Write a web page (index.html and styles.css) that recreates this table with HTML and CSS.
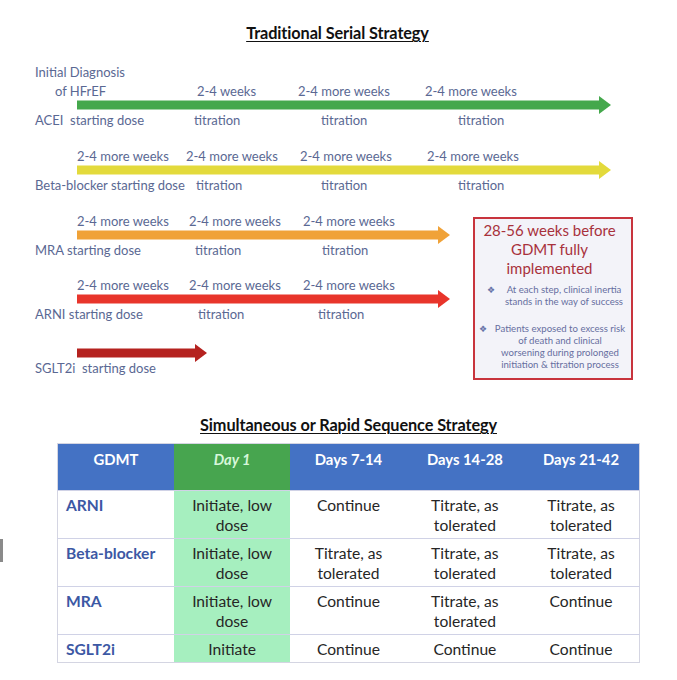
FILE: index.html
```html
<!DOCTYPE html>
<html lang="en">
<head>
<meta charset="utf-8">
<title>GDMT Strategies</title>
<link rel="stylesheet" href="styles.css">
</head>
<body>
<h1 class="title title-top">Traditional Serial Strategy</h1>

<section class="diagram">
  <div class="lbl">Initial Diagnosis</div>

  <div class="track first">
    <div class="lbl row r1t"><span class="indent">of HFrEF</span><span>2-4 weeks</span><span>2-4 more weeks</span><span>2-4 more weeks</span></div>
    <svg class="arrow" width="534" height="18" viewBox="0 0 534 18"><rect x="0" y="4.5" width="524" height="9" fill="#44a84c"/><polygon points="522,0 534,9 522,18" fill="#44a84c"/></svg>
    <div class="lbl row r1b"><span>ACEI&nbsp; starting dose</span><span>titration</span><span>titration</span><span>titration</span></div>
  </div>

  <div class="track gap-a">
    <div class="lbl row r2t"><span></span><span>2-4 more weeks</span><span>2-4 more weeks</span><span>2-4 more weeks</span><span>2-4 more weeks</span></div>
    <svg class="arrow" width="534" height="18" viewBox="0 0 534 18"><rect x="0" y="4.5" width="524" height="9" fill="#e3da3c"/><polygon points="522,0 534,9 522,18" fill="#e3da3c"/></svg>
    <div class="lbl row r2b"><span>Beta-blocker starting dose</span><span>titration</span><span>titration</span><span>titration</span></div>
  </div>

  <div class="lower">
    <div class="tracks">
      <div class="track">
        <div class="lbl row r3t"><span></span><span>2-4 more weeks</span><span>2-4 more weeks</span><span>2-4 more weeks</span></div>
        <svg class="arrow" width="373" height="18" viewBox="0 0 373 18"><rect x="0" y="4.5" width="363" height="9" fill="#f0a238"/><polygon points="361,0 373,9 361,18" fill="#f0a238"/></svg>
        <div class="lbl row r3b"><span>MRA starting dose</span><span>titration</span><span>titration</span></div>
      </div>

      <div class="track gap-b">
        <div class="lbl row r3t"><span></span><span>2-4 more weeks</span><span>2-4 more weeks</span><span>2-4 more weeks</span></div>
        <svg class="arrow" width="373" height="18" viewBox="0 0 373 18"><rect x="0" y="4.5" width="363" height="9" fill="#e8352b"/><polygon points="361,0 373,9 361,18" fill="#e8352b"/></svg>
        <div class="lbl row r4b"><span>ARNI starting dose</span><span>titration</span><span>titration</span></div>
      </div>

      <div class="track gap-c">
        <svg class="arrow" width="130" height="18" viewBox="0 0 130 18"><rect x="0" y="4.5" width="120" height="9" fill="#b5221f"/><polygon points="118,0 130,9 118,18" fill="#b5221f"/></svg>
        <div class="lbl row r5b"><span>SGLT2i&nbsp; starting dose</span></div>
      </div>
    </div>

    <aside class="callout">
      <p class="callout-title">28-56 weeks before GDMT fully implemented</p>
      <div class="bullet b1"><span class="mark">&#10070;</span><span class="btext">At each step, clinical inertia<br>stands in the way of success</span></div>
      <div class="bullet b2"><span class="mark">&#10070;</span><span class="btext">Patients exposed to excess risk<br>of death and clinical<br>worsening during prolonged<br>initiation &amp; titration process</span></div>
    </aside>
  </div>
</section>

<h2 class="title title-bottom">Simultaneous or Rapid Sequence Strategy</h2>

<div class="table-wrap">
  <span class="stray"></span>
  <table class="gdmt">
    <thead>
      <tr><th>GDMT</th><th class="day1"><em>Day 1</em></th><th>Days 7-14</th><th>Days 14-28</th><th>Days 21-42</th></tr>
    </thead>
    <tbody>
      <tr><td class="drug">ARNI</td><td class="day1">Initiate, low dose</td><td>Continue</td><td>Titrate, as tolerated</td><td>Titrate, as tolerated</td></tr>
      <tr><td class="drug">Beta-blocker</td><td class="day1">Initiate, low dose</td><td>Titrate, as tolerated</td><td>Titrate, as tolerated</td><td>Titrate, as tolerated</td></tr>
      <tr><td class="drug">MRA</td><td class="day1">Initiate, low dose</td><td>Continue</td><td>Titrate, as tolerated</td><td>Continue</td></tr>
      <tr><td class="drug">SGLT2i</td><td class="day1">Initiate</td><td>Continue</td><td>Continue</td><td>Continue</td></tr>
    </tbody>
  </table>
</div>
</body>
</html>
```

FILE: styles.css
```css
* { box-sizing: border-box; }

html, body {
  margin: 0;
  padding: 0;
  background: #ffffff;
}

body {
  width: 677px;
  font-family: Lato, "Open Sans", "Liberation Sans", sans-serif;
  color: #222;
}

.title {
  margin: 0;
  font-size: 16.3px;
  line-height: 18px;
  font-weight: 700;
  text-decoration: underline;
  text-underline-offset: 2px;
  text-decoration-thickness: 1px;
  color: #111;
  letter-spacing: -0.1px;
}

.title-top {
  margin-top: 24px;
  text-align: center;
  padding-right: 2px;
}

.title-bottom {
  margin-top: 36px;
  text-align: center;
  padding-left: 20px;
}

/* ---------- serial diagram ---------- */
.diagram {
  margin-top: 23px;
  padding-left: 35px;
}

.lbl {
  font-size: 13px;
  line-height: 14px;
  color: #5a6893;
  white-space: nowrap;
}

.row {
  display: grid;
}

.track { display: flex; flex-direction: column; align-items: flex-start; }
.track > .lbl { align-self: stretch; }

.first { margin-top: 5px; }

.gap-a { margin-top: 22px; }
.gap-b { margin-top: 21px; }
.gap-c { margin-top: 25px; }

.arrow {
  display: block;
  margin: -2px 0 -2px 42px;
}

.arrow + .lbl { margin-top: 1px; }

.indent { padding-left: 20px; }

.r1t { grid-template-columns: 162px 101px 127px auto; }
.r1b { grid-template-columns: 159px 127px 137px auto; }
.r2t { grid-template-columns: 42px 109px 114px 127px auto; }
.r2b { grid-template-columns: 161px 125px 137px auto; }
.r3t { grid-template-columns: 42px 112px 114px auto; }
.r3b { grid-template-columns: 160px 127px auto; }
.r4b { grid-template-columns: 163px 120px auto; }
.r5b { grid-template-columns: auto; }

.lower {
  display: flex;
  align-items: flex-start;
  margin-top: 22px;
}

.tracks {
  width: 438px;
  flex: none;
}

.callout {
  width: 160px;
  height: 163px;
  margin-top: 3px;
  border: 2px solid #c8343d;
  background: #f3f3f9;
  padding: 2px 4px 0 1px;
}

.callout-title {
  margin: 0 4px 0 0;
  font-size: 15px;
  line-height: 19px;
  color: #a8313c;
  text-align: center;
}

.bullet {
  display: flex;
  align-items: flex-start;
  font-size: 9.6px;
  line-height: 12px;
  color: #666ea0;
  white-space: nowrap;
}

.b1 { margin-top: 6px; padding-left: 11px; }
.b2 { margin-top: 15px; padding-left: 3px; }

.mark {
  font-family: "DejaVu Sans", sans-serif;
  font-size: 9px;
  color: #6672a8;
  width: 14px;
  flex: none;
}

.btext {
  flex: 1;
  text-align: center;
}

/* ---------- table ---------- */
.table-wrap {
  display: flex;
  align-items: flex-start;
  margin-top: 9px;
}

.stray {
  width: 3px;
  height: 23px;
  margin-top: 96px;
  background: #8a8a8a;
  flex: none;
}

.gdmt {
  margin-left: 54px;
  width: 583px;
  table-layout: fixed;
  border-collapse: collapse;
  border: 1px solid #d4d5e2;
  font-size: 15.6px;
}

.gdmt th {
  height: 47px;
  vertical-align: top;
  padding: 5px 4px 0;
  background: #4472c4;
  color: #ffffff;
  font-weight: 700;
  font-size: 14.8px;
  line-height: 20px;
  text-align: center;
}

.gdmt th.day1 {
  background: #47a54f;
  color: #d6f7da;
}

.gdmt td {
  vertical-align: top;
  padding: 4px 6px 3px;
  line-height: 20px;
  text-align: center;
  color: #262626;
  border-top: 1px solid #d0d2e6;
}

.gdmt td.day1 {
  background: #a6efbf;
}

.gdmt td.drug {
  text-align: left;
  padding-left: 8px;
  font-weight: 700;
  color: #3c58a4;
}
```
